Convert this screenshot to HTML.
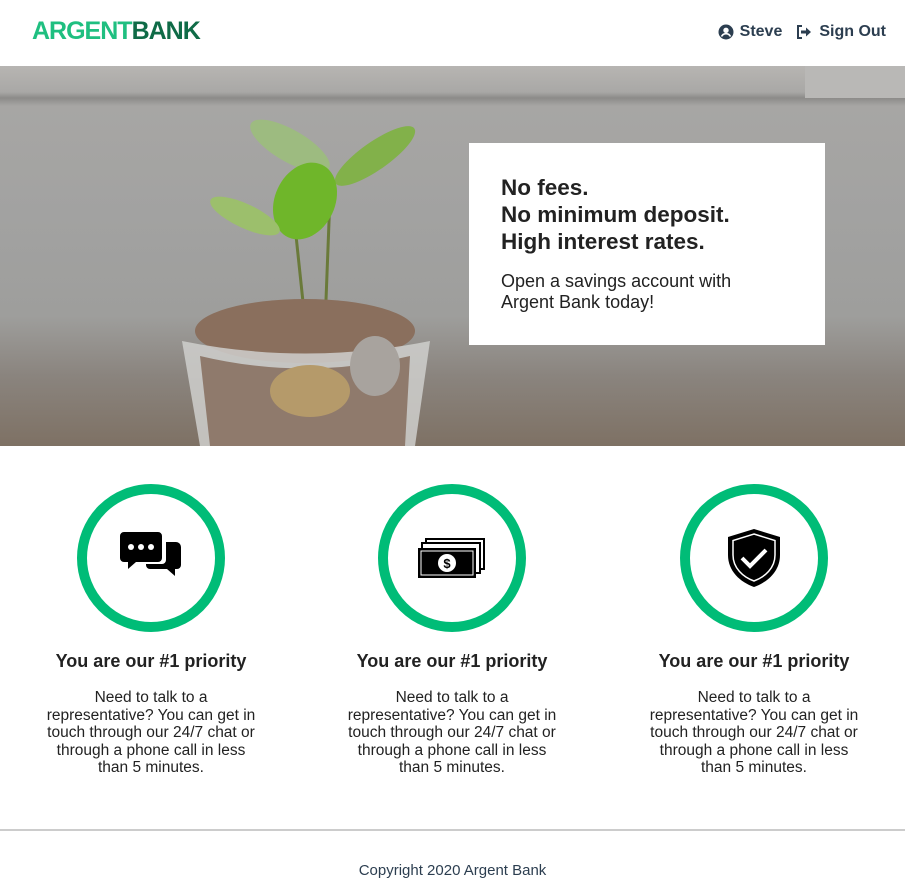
<!DOCTYPE html>
<html><head><meta charset="utf-8"><style>
*{margin:0;padding:0;box-sizing:border-box}
body{width:905px;height:880px;background:#fff;font-family:"Liberation Sans",Arial,sans-serif;color:#2c3e50;position:relative;overflow:hidden}
.nav{height:66px;position:relative}
.logo{position:absolute;left:32px;top:17px;font-size:25px;font-weight:bold;letter-spacing:-1px}
.logo .a{color:#1fbf80}.logo .b{color:#0f6b47}
.links{position:absolute;right:19px;top:23px;font-size:16px;font-weight:bold;color:#2c3e50;display:flex;align-items:center;gap:6px}
.hero{position:absolute;top:66px;left:0;width:905px;height:380px;overflow:hidden;
background:linear-gradient(180deg,#b7b5b2 0px,#a9a8a6 26px,#8c8b89 32px,#a7a6a4 40px,#a2a2a1 150px,#9e9e9c 250px,#8a847e 310px,#7e7164 380px)}
.card{position:absolute;left:469px;top:77px;width:356px;height:202px;background:#fff;padding:31px 32px}
.card h2{font-size:22.5px;line-height:27px;color:#222;font-weight:bold}
.card p{font-size:18px;line-height:21px;color:#222;margin-top:16px;width:260px}
.feat{position:absolute;top:484px;width:300px;text-align:center}
.circ{width:148px;height:148px;border:10px solid #00bc77;border-radius:50%;margin:0 auto;display:flex;align-items:center;justify-content:center}
.feat h3{font-size:18px;font-weight:bold;color:#222;margin-top:19px}
.feat p{font-size:15.5px;line-height:17.5px;color:#222;margin:17px auto 0;width:218px}
.foot{position:absolute;top:829px;left:0;width:905px;border-top:2px solid #ccc;text-align:center;padding-top:31px;font-size:15px;color:#2c3e50}
</style></head><body>
<div class="nav">
<div class="logo"><span class="a">ARGENT</span><span class="b">BANK</span></div>
<div class="links">
<svg width="16" height="16" viewBox="0 0 16 16"><circle cx="8" cy="8" r="7.5" fill="#2c3e50"/><circle cx="8" cy="6.3" r="2.7" fill="#fff"/><path d="M3.5 12.5c1-2 2.5-2.8 4.5-2.8s3.5.8 4.5 2.8" stroke="#fff" stroke-width="1.6" fill="none"/></svg>
<span>Steve</span>
<svg width="17" height="16" viewBox="0 0 17 16" style="margin-left:8px"><path d="M6 2H2v12h4" stroke="#2c3e50" stroke-width="2" fill="none"/><path d="M5 8h6" stroke="#2c3e50" stroke-width="3"/><path d="M10 3.5l5 4.5-5 4.5z" fill="#2c3e50"/></svg>
<span>Sign Out</span>
</div>
</div>
<div class="hero">
<svg width="905" height="380" style="position:absolute;left:0;top:0">
<rect x="805" y="0" width="100" height="32" fill="#b9b8b6"/>
<path d="M330 130 L325 260" stroke="#6a7a3a" stroke-width="3"/>
<path d="M295 160 L305 255" stroke="#6a7a3a" stroke-width="3"/>
<ellipse cx="290" cy="80" rx="45" ry="16" transform="rotate(30 290 80)" fill="#9dbb80"/>
<ellipse cx="375" cy="90" rx="48" ry="14" transform="rotate(-35 375 90)" fill="#82b14a"/>
<ellipse cx="305" cy="135" rx="30" ry="40" transform="rotate(25 305 135)" fill="#6fb62a"/>
<ellipse cx="245" cy="150" rx="38" ry="12" transform="rotate(25 245 150)" fill="#9cbf6c"/>
<ellipse cx="305" cy="265" rx="110" ry="32" fill="#8a6f5d"/>
<path d="M182 275 Q305 300 430 275 L415 380 L200 380 Z" fill="#cfcfcd" opacity="0.85"/>
<path d="M200 290 Q305 315 410 290 L405 380 L210 380 Z" fill="#8f7a6c"/>
<ellipse cx="310" cy="325" rx="40" ry="26" fill="#b59a6a"/>
<ellipse cx="375" cy="300" rx="25" ry="30" fill="#a8a39e"/>
</svg>
<div class="card"><h2>No fees.<br>No minimum deposit.<br>High interest rates.</h2><p>Open a savings account with Argent Bank today!</p></div>
</div>

<div class="feat" style="left:1px">
<div class="circ"><svg width="62" height="52" viewBox="0 0 62 52"><path d="M4 0h34a4 4 0 0 1 4 4v22a4 4 0 0 1-4 4H16l-8 7v-7H4a4 4 0 0 1-4-4V4a4 4 0 0 1 4-4z" fill="#000"/><path d="M46 10h10a5 5 0 0 1 5 5v18a4 4 0 0 1-4 4h-2v7l-8-7H30a4 4 0 0 1-4-4v-1h16a4 4 0 0 0 4-4z" fill="#000"/><circle cx="11" cy="15" r="3" fill="#fff"/><circle cx="21" cy="15" r="3" fill="#fff"/><circle cx="31" cy="15" r="3" fill="#fff"/></svg></div>
<h3>You are our #1 priority</h3>
<p>Need to talk to a representative? You can get in touch through our 24/7 chat or through a phone call in less than 5 minutes.</p>
</div>
<div class="feat" style="left:302px">
<div class="circ"><svg width="68" height="40" viewBox="0 0 68 40"><rect x="8" y="1" width="58" height="30" fill="none" stroke="#000" stroke-width="2"/><rect x="4" y="5" width="58" height="30" fill="#fff" stroke="#000" stroke-width="2"/><rect x="0" y="10" width="58" height="30" fill="#000"/><rect x="3" y="13" width="52" height="24" fill="none" stroke="#fff" stroke-width="1"/><circle cx="29" cy="25" r="9" fill="#fff"/><text x="29" y="30" font-size="13" font-weight="bold" text-anchor="middle" font-family="Liberation Sans">$</text></svg></div>
<h3>You are our #1 priority</h3>
<p>Need to talk to a representative? You can get in touch through our 24/7 chat or through a phone call in less than 5 minutes.</p>
</div>
<div class="feat" style="left:604px">
<div class="circ"><svg width="54" height="60" viewBox="0 0 54 60"><path d="M27 1L53 9v18c0 16-12 27-26 32C13 54 1 43 1 27V9z" fill="#000"/><path d="M27 6L48 12.5v14.5c0 13-10 22-21 26C16 49 6 40 6 27V12.5z" fill="none" stroke="#fff" stroke-width="1.5"/><path d="M15 30l8 8 16-16" stroke="#fff" stroke-width="4" fill="none"/></svg></div>
<h3>You are our #1 priority</h3>
<p>Need to talk to a representative? You can get in touch through our 24/7 chat or through a phone call in less than 5 minutes.</p>
</div>
<div class="foot">Copyright 2020 Argent Bank</div>
</body></html>
